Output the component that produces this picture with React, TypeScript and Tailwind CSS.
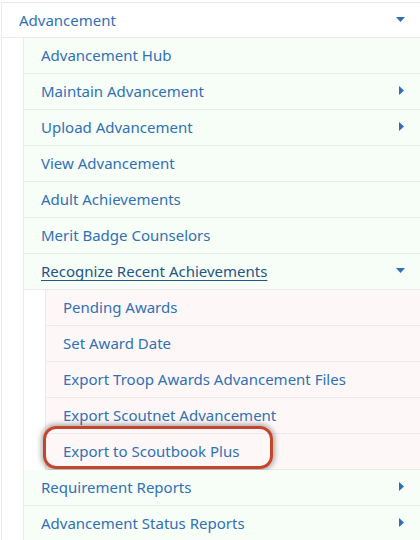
import React from 'react';

type Item = { label: string; caret?: 'right' | 'down'; active?: boolean; highlight?: boolean };

const level1: Item[] = [
  { label: 'Advancement Hub' },
  { label: 'Maintain Advancement', caret: 'right' },
  { label: 'Upload Advancement', caret: 'right' },
  { label: 'View Advancement' },
  { label: 'Adult Achievements' },
  { label: 'Merit Badge Counselors' },
  { label: 'Recognize Recent Achievements', caret: 'down', active: true },
];

const level2: Item[] = [
  { label: 'Pending Awards' },
  { label: 'Set Award Date' },
  { label: 'Export Troop Awards Advancement Files' },
  { label: 'Export Scoutnet Advancement' },
  { label: 'Export to Scoutbook Plus', highlight: true },
];

const level1After: Item[] = [
  { label: 'Requirement Reports', caret: 'right' },
  { label: 'Advancement Status Reports', caret: 'right' },
];

const Caret = ({ dir }: { dir: 'right' | 'down' }) =>
  dir === 'down' ? (
    <svg width="9" height="5" viewBox="0 0 9 5" className="mb-[2px]">
      <path d="M0 0h9L4.5 5z" fill="#2f6fb3" />
    </svg>
  ) : (
    <svg width="5" height="9" viewBox="0 0 5 9" className="mr-[1px] mb-[2px]">
      <path d="M0 0v9l5-4.5z" fill="#2f6fb3" />
    </svg>
  );

const Row = ({ item, bg }: { item: Item; bg: string }) => (
  <div className={`relative h-9 border-b border-[#ebebeb] ${bg} flex items-center justify-between pl-[17px] pr-[15px]`}>
    {item.highlight ? (
      <div className="absolute left-[-3px] top-[-8px] w-[230px] h-[43px] rounded-[13px] border-[3px] border-[#c5462d] shadow-[0_0_5px_2px_rgba(0,0,0,0.3)]" />
    ) : null}
    <span
      className={
        item.active
          ? 'text-[15px] text-[#225685] underline underline-offset-[3px]'
          : 'text-[15px] text-[#3171b3]'
      }
    >
      {item.label}
    </span>
    {item.caret ? <Caret dir={item.caret} /> : null}
  </div>
);

export default function App() {
  return (
    <div className="w-[420px] h-[540px] overflow-hidden bg-white pt-[2px]" style={{ fontFamily: '"Noto Sans", "Open Sans", sans-serif' }}>
      <div className="border-t border-l border-[#ebebeb] ml-[1px]">
        <div className="h-[35px] border-b border-[#ebebeb] bg-white flex items-center justify-between pl-[17px] pr-[15px]">
          <span className="text-[15px] text-[#3171b3]">Advancement</span>
          <Caret dir="down" />
        </div>
        <div className="ml-[21px] border-l border-[#ebebeb]">
          {level1.map((it) => (
            <Row key={it.label} item={it} bg="bg-[#f7fdf7]" />
          ))}
          <div className="ml-[21px] border-l border-[#ebebeb]">
            {level2.map((it) => (
              <Row key={it.label} item={it} bg="bg-[#fdf7f7]" />
            ))}
          </div>
          {level1After.map((it) => (
            <Row key={it.label} item={it} bg="bg-[#f7fdf7]" />
          ))}
        </div>
      </div>
    </div>
  );
}
